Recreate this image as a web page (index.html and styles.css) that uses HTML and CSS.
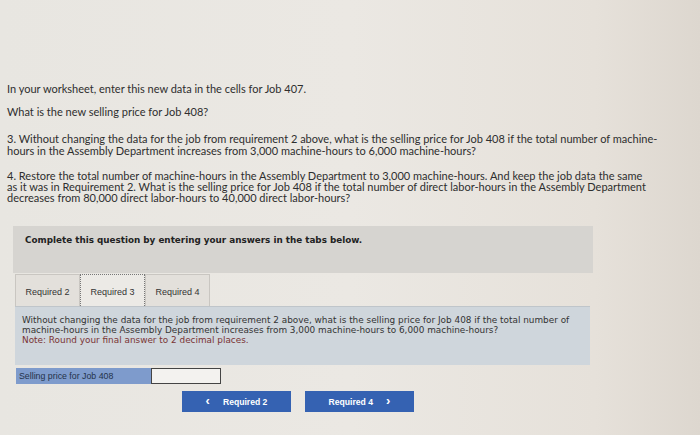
FILE: index.html
```html
<!DOCTYPE html>
<html>
<head>
<meta charset="utf-8">
<link rel="stylesheet" href="styles.css">
</head>
<body>
<div class="page">
  <div class="intro">
    <p class="p1">In your worksheet, enter this new data in the cells for Job 407.</p>
    <p class="p2">What is the new selling price for Job 408?</p>
    <p class="p3">3. Without changing the data for the job from requirement 2 above, what is the selling price for Job 408 if the total number of machine-hours in the Assembly Department increases from 3,000 machine-hours to 6,000 machine-hours?</p>
    <p class="p4">4. Restore the total number of machine-hours in the Assembly Department to 3,000 machine-hours. And keep the job data the same as it was in Requirement 2. What is the selling price for Job 408 if the total number of direct labor-hours in the Assembly Department decreases from 80,000 direct labor-hours to 40,000 direct labor-hours?</p>
  </div>

  <div class="instruct">Complete this question by entering your answers in the tabs below.</div>

  <div class="tabs">
    <div class="tab">Required 2</div>
    <div class="tab active">Required 3</div>
    <div class="tab">Required 4</div>
  </div>

  <div class="qbox">
    <p>Without changing the data for the job from requirement 2 above, what is the selling price for Job 408 if the total number of machine-hours in the Assembly Department increases from 3,000 machine-hours to 6,000 machine-hours?</p>
    <p class="note">Note: Round your final answer to 2 decimal places.</p>
  </div>

  <div class="answer">
    <div class="label">Selling price for Job 408</div>
    <div class="input"></div>
  </div>

  <div class="nav">
    <div class="btn"><span class="chev">&lsaquo;</span>Required 2</div>
    <div class="btn">Required 4<span class="chev right">&rsaquo;</span></div>
  </div>
</div>
</body>
</html>
```

FILE: styles.css
```css
html, body {
  margin: 0;
  padding: 0;
}
body {
  width: 700px;
  height: 435px;
  overflow: hidden;
  background: linear-gradient(90deg, #e8e6e1 0%, #ebe8e3 50%, #e6e1da 85%, #ddd7cf 100%);
  font-family: Lato, "Liberation Sans", sans-serif;
  color: #2e2e2e;
}
.page {
  padding-top: 83px;
}
.intro {
  padding-left: 7px;
  width: 652px;
  font-size: 11px;
  line-height: 12px;
}
.intro p {
  margin: 0;
}
.p2 { margin-top: 11px !important; }
.p3 { margin-top: 15px !important; }
.p4 { margin-top: 13px !important; line-height: 11px; max-width: 645px; }

.instruct {
  margin: 23px 0 0 13px;
  width: 580px;
  height: 47px;
  box-sizing: border-box;
  padding: 9px 0 0 12px;
  background: #d6d4d0;
  font-family: "DejaVu Sans", Verdana, sans-serif;
  font-weight: bold;
  font-size: 8.8px;
  color: #222;
}

.tabs {
  display: flex;
  margin: 1px 0 0 15px;
  height: 32px;
}
.tab {
  width: 65px;
  box-sizing: border-box;
  border: 1px solid #c9c6c1;
  border-bottom: none;
  background: #e3e0db;
  font-family: "Liberation Sans", Arial, sans-serif;
  font-size: 9px;
  color: #333;
  padding-top: 12px;
  text-align: center;
}
.tab.active {
  background: #eceae6;
  border: 1px dotted #777;
  border-bottom: none;
}
.qbox {
  margin-left: 15px;
  width: 575px;
  height: 59px;
  box-sizing: border-box;
  padding: 8px 0 0 7px;
  background: #cfd6dc;
  border-top: 1px solid #bfc5ca;
  font-family: "DejaVu Sans", Verdana, sans-serif;
  font-size: 8.9px;
  line-height: 10px;
  color: #333;
}
.qbox p { margin: 0; width: 560px; }
.qbox .note { color: #7a3434; }

.answer {
  display: flex;
  margin: 3px 0 0 16px;
  height: 16px;
}
.label {
  width: 135px;
  background: #7e9bcc;
  font-family: "Liberation Sans", Arial, sans-serif;
  font-size: 8.8px;
  color: #24324a;
  padding: 3px 0 0 3px;
  box-sizing: border-box;
}
.input {
  width: 70px;
  box-sizing: border-box;
  background: #f3f2ef;
  border: 1px solid #444;
}
.nav {
  display: flex;
  gap: 14px;
  margin: 7px 0 0 182px;
}
.btn {
  width: 109px;
  height: 21px;
  background: #3562b2;
  color: #fff;
  font-family: "Liberation Sans", Arial, sans-serif;
  font-weight: bold;
  font-size: 8.6px;
  display: flex;
  align-items: center;
  justify-content: center;
}
.chev {
  font-size: 13px;
  margin-right: 13px;
  line-height: 1;
  margin-top: -2px;
}
.chev.right {
  margin-right: 0;
  margin-left: 13px;
}
```
